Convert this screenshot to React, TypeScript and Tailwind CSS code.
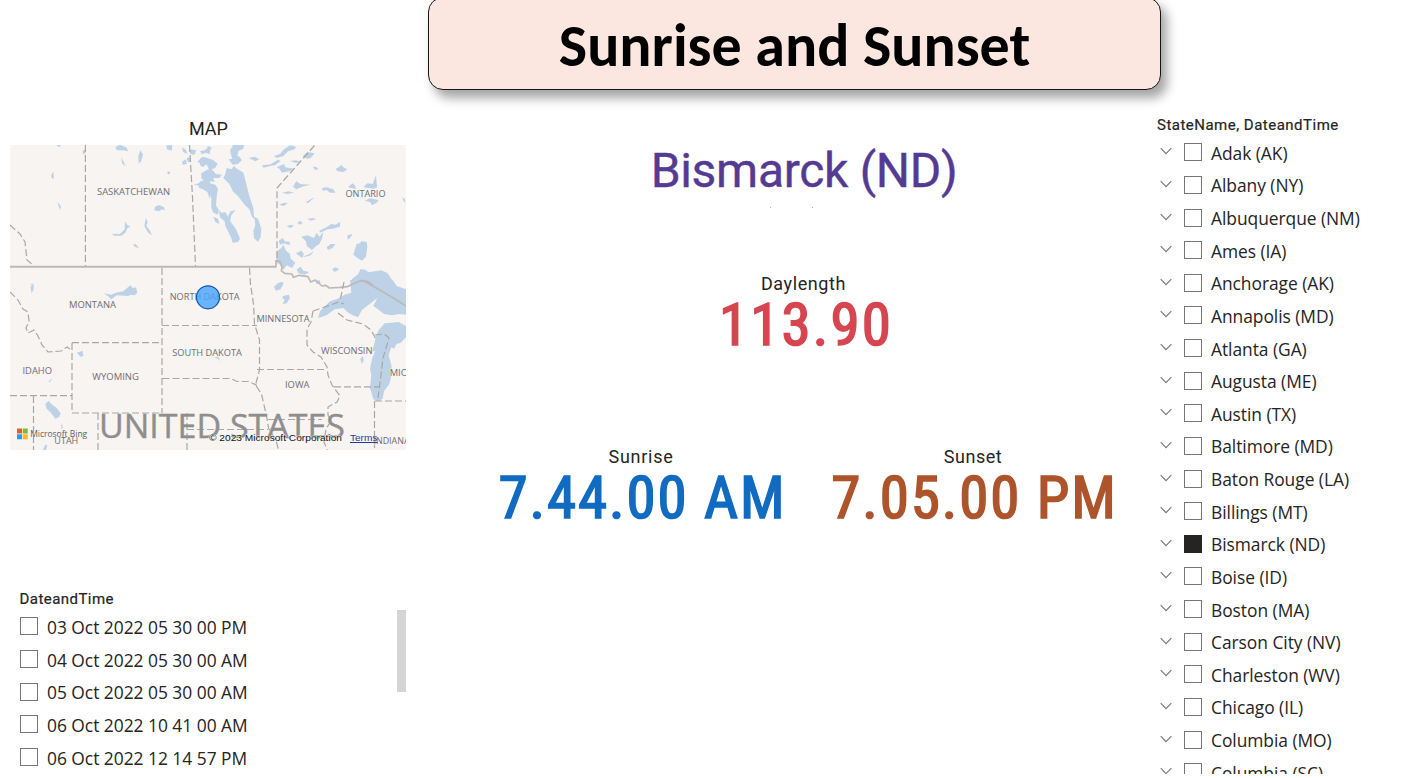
const states = [
  "Adak (AK)",
  "Albany (NY)",
  "Albuquerque (NM)",
  "Ames (IA)",
  "Anchorage (AK)",
  "Annapolis (MD)",
  "Atlanta (GA)",
  "Augusta (ME)",
  "Austin (TX)",
  "Baltimore (MD)",
  "Baton Rouge (LA)",
  "Billings (MT)",
  "Bismarck (ND)",
  "Boise (ID)",
  "Boston (MA)",
  "Carson City (NV)",
  "Charleston (WV)",
  "Chicago (IL)",
  "Columbia (MO)",
  "Columbia (SC)",
];

const dates = [
  "03 Oct 2022 05 30 00 PM",
  "04 Oct 2022 05 30 00 AM",
  "05 Oct 2022 05 30 00 AM",
  "06 Oct 2022 10 41 00 AM",
  "06 Oct 2022 12 14 57 PM",
];

type Label = { text: string; x: number; y: number; w: number };

const labels: Label[] = [
  { text: "SASKATCHEWAN", x: 97, y: 195.3, w: 73 },
  { text: "ONTARIO", x: 345.5, y: 197.3, w: 40 },
  { text: "MONTANA", x: 69, y: 308, w: 47 },
  { text: "NORTH DAKOTA", x: 169.7, y: 299.7, w: 70 },
  { text: "MINNESOTA", x: 256.5, y: 322, w: 53 },
  { text: "SOUTH DAKOTA", x: 172.3, y: 355.7, w: 69.5 },
  { text: "WISCONSIN", x: 321, y: 353.5, w: 51.5 },
  { text: "IDAHO", x: 22.5, y: 373.8, w: 29.5 },
  { text: "WYOMING", x: 92.3, y: 380.2, w: 46.5 },
  { text: "IOWA", x: 285, y: 387.8, w: 24.5 },
  { text: "MICHIGAN", x: 389.7, y: 375.8, w: 46 },
  { text: "UTAH", x: 54.3, y: 443.7, w: 24 },
  { text: "INDIANA", x: 373.5, y: 443.7, w: 36 },
];

function Checkbox({ checked = false }: { checked?: boolean }) {
  return (
    <span
      className={
        checked
          ? "block size-[18px] shrink-0 bg-[#252423]"
          : "block size-[18px] shrink-0 border border-[#77757a] bg-white"
      }
    />
  );
}

function RegionMap() {
  return (
    <svg
      className="block h-[305px] w-[396px]"
      viewBox="10 145 396 305"
      role="img"
      aria-label="Map"
    >
      <rect x="10" y="145" width="396" height="305" fill="#f7f4f2" />

      {/* lakes */}
      <g fill="#bdd2e7">
        <g transform="translate(0 110) scale(.33333)">
          <path d="M170 104h13l-4 7-8-3zM248 122l8-4 1 10-5 6-4-5zM153 197l7-12 2 22-7-3zM172 276l11 12-3 13zM346 112l14-8 20 9 4 11-14-3-20 0zM415 138l6-17 8 12-6 22-7 5zM363 142l8 13 6 14-10-8zM499 106l18 0-2 16-14-4zM501 186l8-2 2 7-7 2zM465 290l12-5 14 6 4 10-10-3-8 6-14-3zM334 371l26 1 14-14 1-24 6 10 11 6-9 3-7 15-12 9-20 0zM438 323l5 14-4 10 10 14 7 15-13-9-10-20zM399 402l9 1 9 12-13-5zM546 112l12 8 4 12-13-6zM569 118l20 3-6 14-13-4zM546 155l12-7 2 14-11 3zM560 145l8-4 6 14-10 2zM592 155l16-15 12 4 10 9v10l-14-6-10 6zM603 190l10 4 4-10 13 4v80l-8-22-14-8-10-4-4-8-14-2 16-4 6-6 10-4-4-8zM616 118l14-2v16l-10-2zM92 523l7-2 3 4h-10z" />
        </g>
        <g transform="translate(200 110) scale(.33333)">
          <path d="M0 124l18-4 6-12 12 5-10 12-20 8zM0 145l20-2 18 6 15 12-8 14-18 4-7-16-12 8-8-6zM90 122l10-18h32l-2 12-14 6-4 16-16 6zM86 148l10-2 6-16 14 8 10 12-12 12-16 2zM146 144l18-4 14 8-12 6zM186 166l26-3 22-14 8 4-16 12-18 4-18 4zM222 138l18-6 12-14 18-12 18 4-4 8-20 6-14 14-20 6zM230 172l22-10 4 10 26 4-14 8-22 4-8-12zM270 153l18-2 12 4-12 4zM308 138l14-12 22 4-12 14-10 3zM338 170l10 0 8 8-10 2zM406 178l12-8 6-6 6 8 12 6-12 8-16-2zM444 230l14-10 8 8 2 8-16-2zM490 232l12-12 16 2 10-26 3 36-10 4-16-2zM494 272l16-7 26 5-6 8-14 8-6-10zM606 262l8 4 3 12-6-4zM366 234l14-2 20 6 6 10-16 0-10-8-12 2zM279 230l10-16 12 8 30 2-24 6-18 8zM246 248l20-4 16 4-20 4zM238 284l14-6 12 2-14 8zM318 276l14-8 12-6-20 18zM260 348l14-4 8 4-12 6zM292 338l10-6 6 8-10 4zM322 326l18-2 8 4-16 4zM358 362l24-12 12-8 12 2 14-8v14l-22 6-14 2-24 10zM304 380l18-4 20 8 8-16 8 12 12-14-4 20-8 16-12 8-10 10-16-12-2-14zM380 412l12-10 14 0-8 12-14 6zM442 376l16-4-8 12-6 6zM288 430l16-8 8 10-6 12zM308 440l20-8 14-10-10 14-14 4zM236 392l12-8 6 10 16 2-2 10-14-6-14 4zM230 424l14-10 6-10 8 18 12 10 2 14 14 12-10 16-16-8-10 14-10-16-10-6zM290 478l12-8 8 12 18 4-14 8-18-4zM396 478l10-6 12 6-14 8zM470 402l10-2 4-6 16 2 2 14-4 30-12 12-14-8-12-10 4-14zM230 522l12-6 10 2-6 7zM452 525l4-18 18-14 8-16 14 2 10 8 38-6 18 8 14 20 6 16z" />
          <path d="M70 204l6-12 4-18 14 4 8-10 6 6 22 14 8 30 10 40 12 36 2 26 12 6 10 30-2 24-8 16-12-12-2-22 6-16-2-18-8-8-8-22-14-14-22-28-12-10-12-24z" />
          <path d="M4 190l16-10 14-4 14 16 18 2-8 10-18 0 4 12-24-4-16-6z" />
          <path d="M0 218l24 0 22 6 8 12-4 24-2 26 8 14-2 14-14-6-6-14 0-30-8-20-12-12-14-8z" />
          <path d="M56 298l8 10 12-2 10 18 8 14 14 20 12 28-6 10-16 2-4-14-10-20-8-16-2-14-14-12zM84 318l8-14 14-4-12 16-4 18z" />
          <path d="M40 320l14 6 4 16-12-6z" />
        </g>
        <g transform="translate(0 280) scale(.33333)">
          <path d="M92 18l10-3-2 16-6 9zM312 40l22 4 14-6 22-4 14-12 8-6 6 8 10-2 4 16-8 8-12-2-8 4-34-2-16 12-8-8zM230 218l18-6 2 16-8 2zM144 306l14-12-8 12zM136 372l10-10 8 10 16 12 12 16-4 10-12 6-12-16-14-14zM183 430l6 10-4 10zM130 506l6-12 6 2-4 14h-8z" />
        </g>
        <g transform="translate(200 280) scale(.33333)">
          <path d="M222 20l12-10 16 2-8 16-14 4zM248 48l18-4 4 10-10 16-12 2 6-14-6-2zM42 232l14-2 4 14-6-8zM481 236l8-8 2 14-6 10zM346 4l12-4 4 8-12 4zM450 0h128l12 18 28 10v76l-20-2-22 4-24-4-18-14-14-10 12-24-20 16-26 20-12 22-16-6-16-10-12-12-26 4-24 18-26 8 6-20 30-30 20-6 24-14 20-6z" />
          <path d="M528 168l8-18 18-20 20-2 22-2 22 12v34l-16 16-12 4-8 14-8-4-8 24 8 30 2 24-8 32-16 22-4 22-14 8-14-6-10-34 4-40-4-18 6-30 10-24-12 4 8-20z" />
        </g>
      </g>

      {/* national border */}
      <g fill="none" stroke="#bdb9b7" strokeWidth="1.900" strokeLinejoin="round">
        <path d="M10 266.800H276" />
        <g transform="translate(200 110) scale(.33333)" strokeWidth="5">
          <path d="M228 472v-20l12 2 6 18-2 10 10 8 22 2 4 10 18-6 26 4 8 16 14-6 20 18 12-2 10 8 32-2 22-2 16-8 24-10 22 2 15 12" />
        </g>
        <g transform="translate(200 280) scale(.33333)" strokeWidth="5">
          <path d="M486 0l60 34 40 24 32 20" />
        </g>
      </g>

      {/* state and province borders */}
      <g fill="none" stroke="#aaa7a5" strokeWidth="1.200" strokeDasharray="7 3">
        <path d="M85.400 145V266M189.500 145l3 52 3 69M314.500 145.500L277 188V262M162 268V413M162 325.500H257M162.500 378.500H231l6 3h12l8 4M72 342.700H162M72 343V413H162M10 395.700H72M33.500 396V450M98 413V450M187 413V450M187 429.500H268M249.500 268l1 16 3 20 1 20 5 16v30l-4 15 6 9 5 22 2 12 8 14 3 12M257 369.500H326M268 419.500H322M334 386.800H380M375 401H406M374.500 401V450" />
        <path d="M10 225l10 9 5 8 2 18 7 6" />
        <path d="M10 292l8 8 5 9 5 3 1 9-3 7 2 5 6-3 4 6 4 9 6 7 13-1 6-4 3 2" />
        <path d="M313 311l-2 11-4 7v16l6 7 8 5 6 10 1 8 4 10 8 11-3 6-9 5v8l3 6-5 8-2 13 4 10 8 8" />
        <path d="M313 311l26-9 5 2M344 282l-4 19M338 313l9 7 16 4 8 6 5 9M375 335l9-1 5 4-6 20-3 25-2 15" />
      </g>

      {/* place names */}
      <g
        className="font-['Open_Sans','Noto_Sans',sans-serif]"
        fontSize="9.800"
        fill="#6f6e72"
      >
        {labels.map((l) => (
          <text
            key={l.text}
            x={l.x}
            y={l.y}
            textLength={l.w}
            lengthAdjust="spacingAndGlyphs"
            stroke="#f7f4f2"
            strokeWidth="1"
            paintOrder="stroke"
          >
            {l.text}
          </text>
        ))}
        <text
          x="99"
          y="437.800"
          fontSize="33.500"
          textLength="246"
          lengthAdjust="spacingAndGlyphs"
          fill="#8f8e8e"
          stroke="#8f8e8e"
          strokeWidth=".4"
        >
          UNITED STATES
        </text>
        <text x="30.200" y="437.300" fontSize="9.300" textLength="57" lengthAdjust="spacingAndGlyphs" fill="#5d5c5c">
          Microsoft Bing
        </text>
      </g>

      <path d="M17 428.500h5v5h-5z" fill="#f1582a" />
      <path d="M22.700 428.500h5v5h-5z" fill="#7fb83c" />
      <path d="M17 434.300h5v5h-5z" fill="#1ba3e8" />
      <path d="M22.700 434.300h5v5h-5z" fill="#fbb925" />

      <g className="font-['Liberation_Sans',Arial,sans-serif]" fontSize="9.900">
        <text x="209" y="441" textLength="133" lengthAdjust="spacingAndGlyphs" fill="#111" stroke="#f7f4f2" strokeWidth=".8" paintOrder="stroke">
          © 2023 Microsoft Corporation
        </text>
        <text x="350" y="441" textLength="27.300" lengthAdjust="spacingAndGlyphs" fill="#1d3f9b">
          Terms
        </text>
      </g>
      <path d="M350 442.500h27.500" stroke="#1d3f9b" strokeWidth="1" />

      <circle cx="208" cy="297.300" r="11.500" fill="#4aa5ff" fillOpacity=".82" stroke="#1a55b5" strokeWidth="1.200" />
    </svg>
  );
}

function Chevron() {
  return (
    <svg className="h-[8px] w-[12px] shrink-0" viewBox="0 0 12 8" fill="none">
      <path d="M.7 1.200 6 6.600l5.300-5.400" stroke="#77757a" strokeWidth="1.100" />
    </svg>
  );
}

export default function App() {
  return (
    <div className="grid h-[778px] w-[1404px] grid-cols-[428px_729px_247px] overflow-hidden bg-white font-['Roboto',sans-serif] text-[#252423]">
      <section className="flex flex-col">
        <h2 className="mt-[117px] pl-[189px] text-[18px] leading-6">MAP</h2>
        <div className="mt-1 pl-[10px]">
          <RegionMap />
        </div>
        <h2 className="mt-[139px] pl-[19.500px] text-[15px] leading-5 tracking-[0.450px] [-webkit-text-stroke:0.2px]">
          DateandTime
        </h2>
        <div className="flex justify-between pr-[22.500px] pl-5">
          <ul className="flex flex-col pt-[1px] font-['Open_Sans','Noto_Sans',sans-serif] text-[17.400px] tracking-[-0.020px]">
            {dates.map((d) => (
              <li key={d} className="flex h-[32.700px] items-center gap-[9px]">
                <Checkbox />
                <span className="pt-[1px] leading-6 whitespace-nowrap">{d}</span>
              </li>
            ))}
          </ul>
          <div className="mt-[1px] h-[82px] w-[9px] bg-[#d6d5d5]" />
        </div>
      </section>

      <main className="flex flex-col">
        <h1 className="-mt-[3px] flex h-[93px] w-[733px] items-center justify-center rounded-[15px] border border-[#1b1414] bg-[#fbe7e0] pt-[5px] font-['Carlito','Lato',sans-serif] text-[60px] leading-none font-bold text-black shadow-[6px_8px_11px_rgba(0,0,0,0.36)]">
          Sunrise and Sunset
        </h1>
        <div className="mt-[51px] pl-[23px] text-center text-[48px] leading-[60px] tracking-[-0.300px] text-[#553a92] [-webkit-text-stroke:0.4px]">
          Bismarck (ND)
        </div>
        <div className="flex gap-[41px] pt-[6px] pl-[342px]">
          <span className="size-px bg-[#b8b8b8]" />
          <span className="size-px bg-[#a8a8a8]" />
        </div>
        <div className="mt-[64px] flex flex-col items-center pl-[22px]">
          <div className="text-[18px] leading-6 tracking-[0.600px]">Daylength</div>
          <div className="-mt-px pl-[5px] font-['Roboto_Condensed','Roboto',sans-serif] text-[59px] leading-[60px] tracking-[2.100px] text-[#d64550] [-webkit-text-stroke:1.6px]">
            113.90
          </div>
        </div>
        <div className="mt-[90px] flex justify-center pl-[29px] text-center">
          <div className="flex w-[332px] flex-col items-center">
            <div className="text-[18px] leading-6 tracking-[0.700px]">Sunrise</div>
            <div className="-mt-px pl-[3px] font-['Roboto_Condensed','Roboto',sans-serif] text-[59px] leading-[60px] tracking-[1.900px] whitespace-nowrap text-[#106bc1] [-webkit-text-stroke:1.6px]">
              7.44.00 AM
            </div>
          </div>
          <div className="flex w-[332px] flex-col items-center">
            <div className="text-[18px] leading-6 tracking-[0.500px]">Sunset</div>
            <div className="-mt-px pl-[3px] font-['Roboto_Condensed','Roboto',sans-serif] text-[59px] leading-[60px] tracking-[1.900px] whitespace-nowrap text-[#ae542b] [-webkit-text-stroke:1.6px]">
              7.05.00 PM
            </div>
          </div>
        </div>
      </main>

      <aside className="flex h-[774px] flex-col overflow-hidden">
        <h2 className="mt-[115px] text-[15px] leading-5 tracking-[0.490px] whitespace-nowrap [-webkit-text-stroke:0.2px]">
          StateName, DateandTime
        </h2>
        <ul className="flex flex-col pt-[1px] pl-[3px] font-['Open_Sans','Noto_Sans',sans-serif] text-[17.400px] tracking-[-0.040px]">
          {states.map((s) => (
            <li key={s} className="flex h-[32.630px] shrink-0 items-center">
              <span className="-mt-[2px]">
                <Chevron />
              </span>
              <span className="ml-[12px]">
                <Checkbox checked={s === "Bismarck (ND)"} />
              </span>
              <span className="ml-[9px] pt-[1px] leading-6 whitespace-nowrap">{s}</span>
            </li>
          ))}
        </ul>
      </aside>
    </div>
  );
}
